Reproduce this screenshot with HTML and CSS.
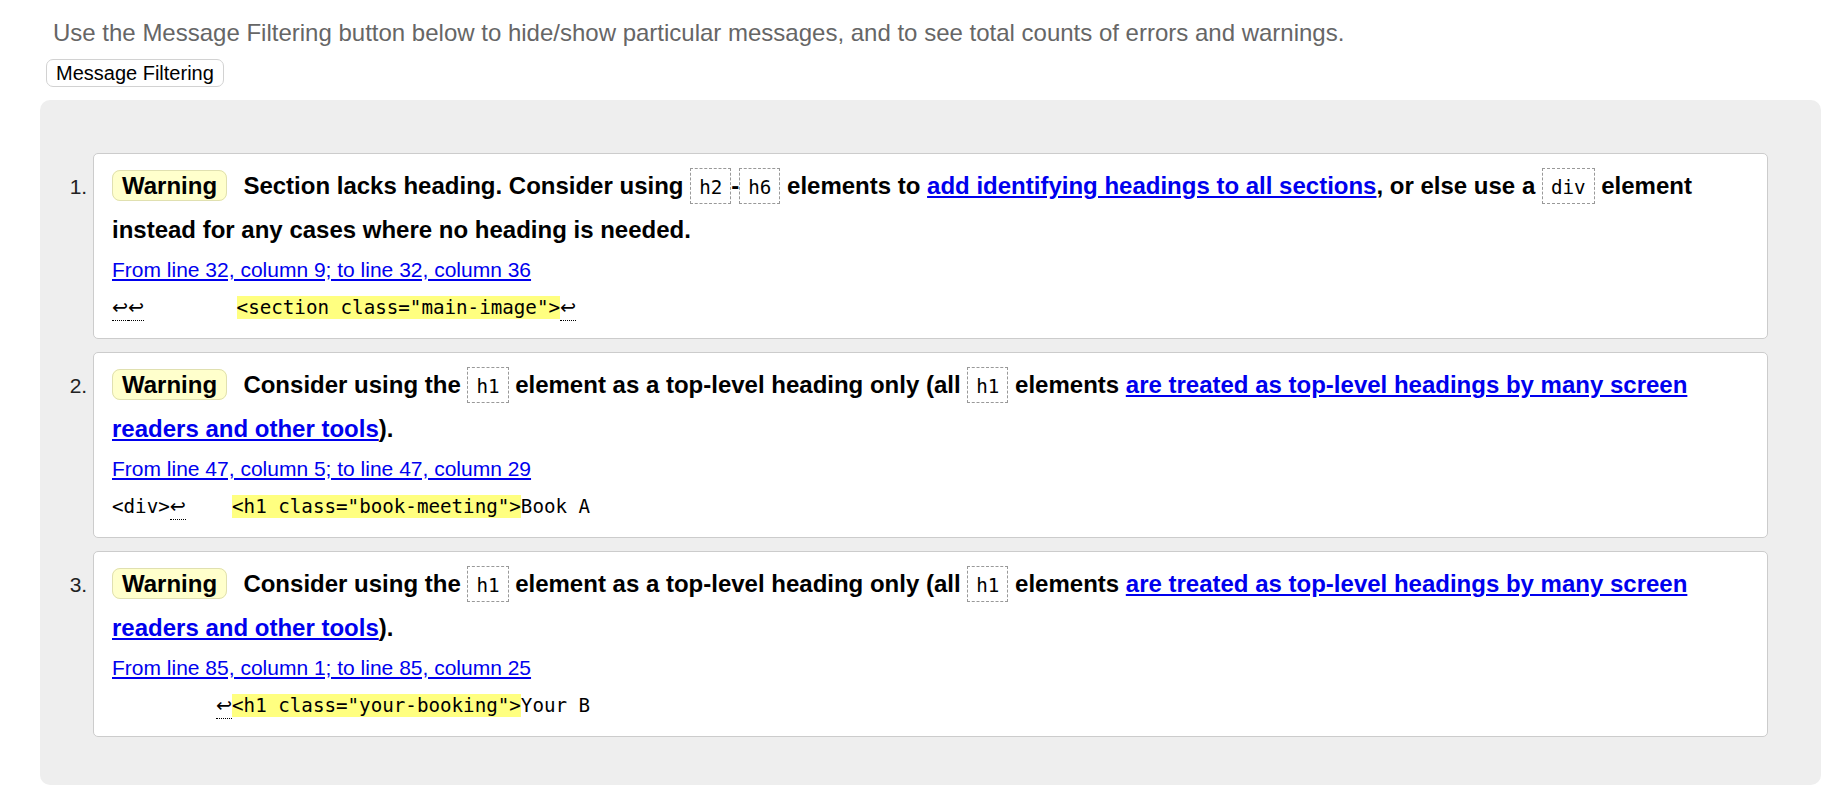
FILE: index.html
```html
<!DOCTYPE html>
<html lang="en">
<head>
<meta charset="utf-8">
<title>Nu Html Checker results</title>
<link rel="stylesheet" href="styles.css">
</head>
<body>
<p class="intro">Use the Message Filtering button below to hide/show particular messages, and to see total counts of errors and warnings.</p>
<button class="filter-btn" type="button">Message Filtering</button>
<ol class="results">
<li class="card">
<p class="message"><strong class="badge">Warning</strong> <span>Section lacks heading. Consider using <code>h2</code>-<code>h6</code> elements to <a href="#">add identifying headings to all sections</a>, or else use a <code>div</code> element instead for any cases where no heading is needed.</span></p>
<p class="location"><a href="#">From line 32, column 9; to line 32, column 36</a></p>
<p class="extract"><code><span class="lf">↩</span><span class="lf">↩</span>        <b>&lt;section class="main-image"&gt;</b><span class="lf">↩</span></code></p>
</li>
<li class="card">
<p class="message"><strong class="badge">Warning</strong> <span>Consider using the <code>h1</code> element as a top-level heading only (all <code>h1</code> elements <a href="#">are treated as top-level headings by many screen readers and other tools</a>).</span></p>
<p class="location"><a href="#">From line 47, column 5; to line 47, column 29</a></p>
<p class="extract"><code>&lt;div&gt;<span class="lf">↩</span>    <b>&lt;h1 class="book-meeting"&gt;</b>Book A</code></p>
</li>
<li class="card">
<p class="message"><strong class="badge">Warning</strong> <span>Consider using the <code>h1</code> element as a top-level heading only (all <code>h1</code> elements <a href="#">are treated as top-level headings by many screen readers and other tools</a>).</span></p>
<p class="location"><a href="#">From line 85, column 1; to line 85, column 25</a></p>
<p class="extract"><code>         <span class="lf">↩</span><b>&lt;h1 class="your-booking"&gt;</b>Your B</code></p>
</li>
</ol>
</body>
</html>
```
FILE: styles.css
```css
html, body {
  margin: 0;
  padding: 0;
  overflow: hidden;
  background: #fff;
}

body {
  font-family: "Liberation Sans", Arial, sans-serif;
  color: #000;
}

.intro {
  margin: 0;
  padding: 19px 0 0 53px;
  font-size: 24px;
  line-height: 27px;
  color: #666;
}

.filter-btn {
  display: block;
  box-sizing: border-box;
  margin: 13px 0 0 46px;
  height: 28px;
  padding: 0 9px;
  font-family: "Liberation Sans", Arial, sans-serif;
  font-size: 20px;
  color: #000;
  background: #fff;
  border: 1px solid #d2d2d2;
  border-radius: 7px;
}

.results {
  list-style: decimal outside;
  margin: 13px 13px 0 40px;
  padding: 53px 53px 48px 53px;
  background: #eee;
  border-radius: 10px;
  font-size: 21px;
  color: #222;
}

.card {
  background: #fff;
  border: 1px solid #ccc;
  border-radius: 5px;
  padding: 10px 18px 11px;
  margin-bottom: 13px;
}

.card:last-child {
  margin-bottom: 0;
}

.card::marker {
  color: #222;
}

.message {
  margin: 0;
  font-size: 24px;
  line-height: 43.5px;
  font-weight: bold;
  color: #000;
}

.badge {
  background: #ffffcc;
  border: 1px solid #e0e0b0;
  border-radius: 8px;
  padding: 1px 9px;
  margin-right: 9.6px;
}

.message code {
  font-family: "DejaVu Sans Mono", monospace;
  font-size: 19.2px;
  line-height: 20px;
  font-weight: normal;
  border: 1px dashed #999;
  padding: 7px 8px 3.5px;
}

.message a,
.location a {
  color: #0000ee;
}

.location {
  margin: 0;
  padding-top: 1px;
  font-size: 21px;
  line-height: 36px;
}

.extract {
  margin: 0;
  padding-top: 1px;
  font-family: "DejaVu Sans Mono", monospace;
  font-size: 19.2px;
  line-height: 38px;
  color: #000;
}

.extract code {
  font-family: "DejaVu Sans Mono", monospace;
  font-size: 19.2px;
  white-space: pre;
}

.extract b {
  font-weight: normal;
  background: #ffff80;
}

.lf {
  font-family: "DejaVu Sans", sans-serif;
  line-height: 20px;
  border-bottom: 1px dotted #000;
  padding-bottom: 1px;
}
```
